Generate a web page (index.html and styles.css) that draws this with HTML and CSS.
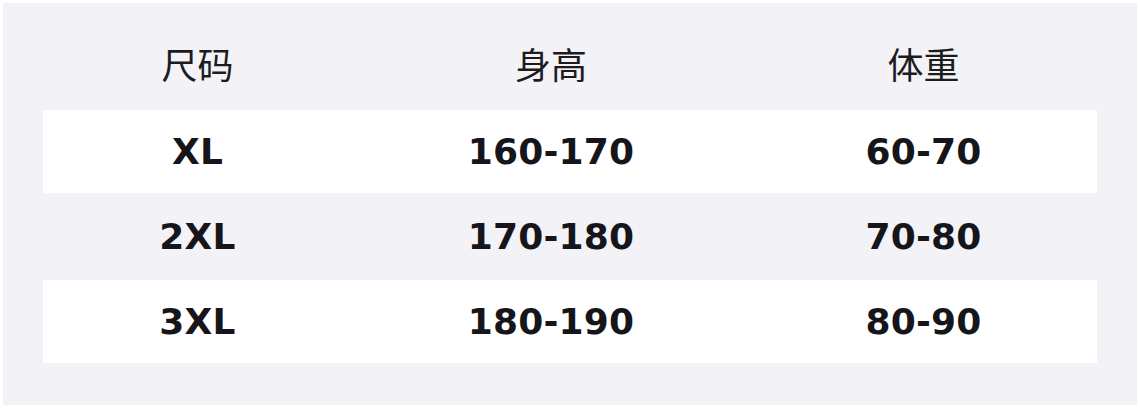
FILE: index.html
```html
<!DOCTYPE html>
<html lang="zh">
<head>
<meta charset="utf-8">
<title>尺码表</title>
<link rel="stylesheet" href="styles.css">
</head>
<body>
<div class="panel">
  <div class="size-table">
    <div class="row head">
      <div class="cell">尺码</div>
      <div class="cell">身高</div>
      <div class="cell">体重</div>
    </div>
    <div class="row light">
      <div class="cell">XL</div>
      <div class="cell">160-170</div>
      <div class="cell">60-70</div>
    </div>
    <div class="row mid">
      <div class="cell">2XL</div>
      <div class="cell">170-180</div>
      <div class="cell">70-80</div>
    </div>
    <div class="row light">
      <div class="cell">3XL</div>
      <div class="cell">180-190</div>
      <div class="cell">80-90</div>
    </div>
  </div>
</div>
</body>
</html>
```
FILE: styles.css
```css
html, body {
  margin: 0;
  padding: 0;
  background: #ffffff;
}
body {
  width: 1140px;
  height: 408px;
  padding: 3px;
  box-sizing: border-box;
  font-family: "DejaVu Sans", "Noto Sans CJK SC", sans-serif;
  color: #1c1c1e;
}
.panel {
  background: #f2f2f7;
  height: 402px;
  padding: 22px 40px 0 40px;
  box-sizing: border-box;
}
.size-table {
  display: flex;
  flex-direction: column;
}
.row {
  display: grid;
  grid-template-columns: 309px 398px 347px;
  align-items: center;
}
.cell {
  text-align: center;
}
.head {
  height: 85px;
  font-family: "Noto Sans CJK SC", sans-serif;
  font-size: 36px;
  font-weight: 400;
  padding-bottom: 9px;
  box-sizing: border-box;
}
.light {
  height: 83px;
  background: #ffffff;
}
.mid {
  height: 87px;
}
.light, .mid {
  font-size: 36px;
  font-weight: 700;
  letter-spacing: 0.2px;
  color: #16161a;
}
```
